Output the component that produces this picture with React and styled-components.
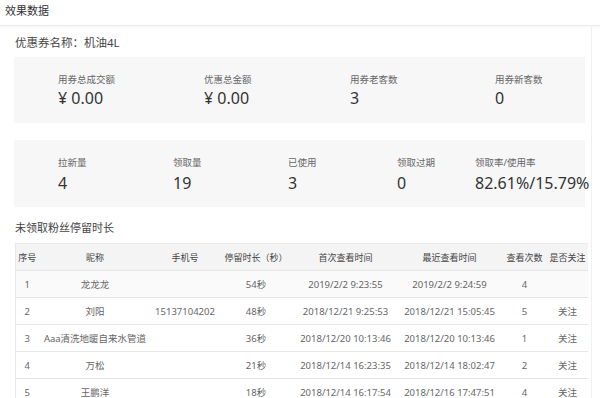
import React from 'react';
import styled, { createGlobalStyle } from 'styled-components';

const GlobalStyle = createGlobalStyle`
  html, body {
    margin: 0;
    padding: 0;
    background: #fff;
  }
  body {
    font-family: "Noto Sans", "Noto Sans CJK SC", sans-serif;
    color: #333;
  }
`;

const Page = styled.div`
  width: 600px;
  height: 398px;
  overflow: hidden;
  background: #fff;
`;

const Header = styled.div`
  height: 25px;
  padding-left: 5px;
  font-size: 11px;
  line-height: 21px;
  color: #333;
  border-bottom: 1px solid #ececec;
  box-shadow: 0 1px 2px rgba(0, 0, 0, 0.05);
`;

const Content = styled.div`
  width: 592px;
  box-sizing: border-box;
  padding: 0 0 0 14px;
  border-right: 1px solid #f0f0f0;
  height: 372px;
`;

const CouponName = styled.div`
  font-size: 11.5px;
  line-height: 14px;
  padding: 10px 0 7px 1px;
  color: #444;
`;

const StatCard = styled.div`
  width: 571px;
  box-sizing: border-box;
  background: #f7f7f8;
  padding: ${p => p.$pad};
  margin-bottom: ${p => p.$gap || 0}px;
  display: grid;
  grid-template-columns: ${p => p.$cols};
`;

const Stat = styled.div`
  display: flex;
  flex-direction: column;
  gap: ${p => p.$gap || 1}px;
`;

const Label = styled.div`
  font-size: 9.5px;
  line-height: 14px;
  color: #666;
`;

const Value = styled.div`
  font-size: 16px;
  line-height: 20px;
  color: #333;
  white-space: nowrap;
`;

const SectionTitle = styled.div`
  font-size: 11px;
  line-height: 14px;
  color: #444;
  padding: 14px 0 8px 1px;
`;

const Table = styled.table`
  border-collapse: collapse;
  table-layout: fixed;
  width: 572px;
  margin-left: 1px;
  border-left: 1px solid #e8e8e8;
  border-top: 1px solid #ececec;
  font-size: 9.5px;
`;

const Col = styled.col`
  width: ${p => p.$w}px;
`;

const Th = styled.th`
  font-weight: normal;
  height: 26px;
  background: #f4f4f5;
  color: #444;
  font-size: 9px;
  text-align: center;
  padding: 0;
  white-space: nowrap;
  border-bottom: 1px solid #e6e6e6;
`;

const Td = styled.td`
  height: 26px;
  padding: 0;
  text-align: center;
  color: #666;
  white-space: nowrap;
  border-bottom: 1px solid #e6e6e6;
  background: ${p => (p.$shade ? '#fafafa' : '#fff')};
`;

const columns = [
  { title: '序号', width: 23 },
  { title: '昵称', width: 113 },
  { title: '手机号', width: 67 },
  { title: '停留时长（秒）', width: 75 },
  { title: '首次查看时间', width: 104 },
  { title: '最近查看时间', width: 104 },
  { title: '查看次数', width: 46 },
  { title: '是否关注', width: 40 },
];

const rows = [
  ['1', '龙龙龙', '', '54秒', '2019/2/2 9:23:55', '2019/2/2 9:24:59', '4', ''],
  ['2', '刘阳', '15137104202', '48秒', '2018/12/21 9:25:53', '2018/12/21 15:05:45', '5', '关注'],
  ['3', 'Aaa清洗地暖自来水管道', '', '36秒', '2018/12/20 10:13:46', '2018/12/20 10:13:46', '1', '关注'],
  ['4', '万松', '', '21秒', '2018/12/14 16:23:35', '2018/12/14 18:02:47', '2', '关注'],
  ['5', '王鹏洋', '', '18秒', '2018/12/14 16:17:54', '2018/12/16 17:47:51', '4', '关注'],
];

const summary = [
  { label: '用券总成交额', value: '¥ 0.00' },
  { label: '优惠总金额', value: '¥ 0.00' },
  { label: '用券老客数', value: '3' },
  { label: '用券新客数', value: '0' },
];

const usage = [
  { label: '拉新量', value: '4' },
  { label: '领取量', value: '19' },
  { label: '已使用', value: '3' },
  { label: '领取过期', value: '0' },
  { label: '领取率/使用率', value: '82.61%/15.79%' },
];

export default function App() {
  return (
    <Page>
      <GlobalStyle />
      <Header>效果数据</Header>
      <Content>
        <CouponName>优惠券名称：机油4L</CouponName>

        <StatCard $pad="16px 0 15px 44px" $cols="146px 146px 145px 1fr" $gap={17}>
          {summary.map(s => (
            <Stat key={s.label}>
              <Label>{s.label}</Label>
              <Value>{s.value}</Value>
            </Stat>
          ))}
        </StatCard>

        <StatCard $pad="16px 0 14px 44px" $cols="115px 115px 109px 78px 1fr">
          {usage.map(s => (
            <Stat key={s.label} $gap={3}>
              <Label>{s.label}</Label>
              <Value>{s.value}</Value>
            </Stat>
          ))}
        </StatCard>

        <SectionTitle>未领取粉丝停留时长</SectionTitle>

        <Table>
          <colgroup>
            {columns.map(c => (
              <Col key={c.title} $w={c.width} />
            ))}
          </colgroup>
          <thead>
            <tr>
              {columns.map(c => (
                <Th key={c.title}>{c.title}</Th>
              ))}
            </tr>
          </thead>
          <tbody>
            {rows.map((r, i) => (
              <tr key={r[0]}>
                {r.map((cell, j) => (
                  <Td key={j} $shade={i === 0}>{cell}</Td>
                ))}
              </tr>
            ))}
          </tbody>
        </Table>
      </Content>
    </Page>
  );
}
